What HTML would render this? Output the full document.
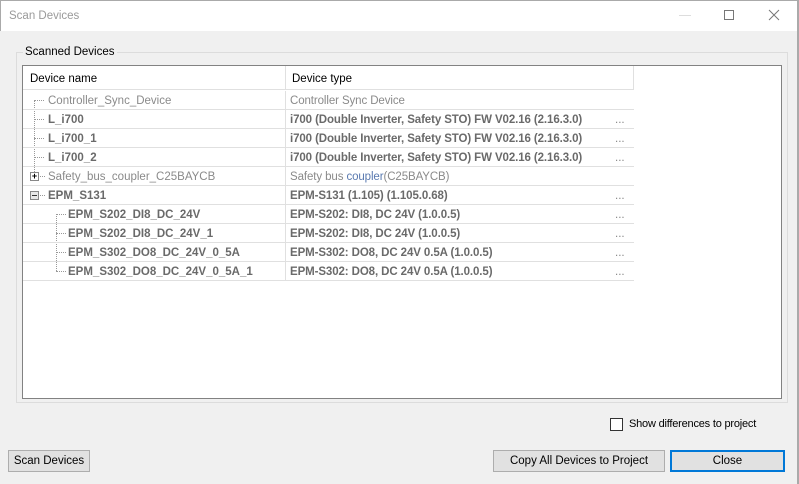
<!DOCTYPE html>
<html><head><style>
*{margin:0;padding:0;box-sizing:border-box}
body{width:799px;height:484px;background:#f0f0f0;font-family:"Liberation Sans",sans-serif;font-size:12px;color:#000;position:relative;overflow:hidden}
.a{position:absolute}
.title{left:0;top:0;width:799px;height:31px;background:#fff;border:1px solid #aaa;border-bottom:none}
.grp{left:16px;top:52px;width:772px;height:351px;border:1px solid #dcdcdc}
.grid{left:22px;top:65px;width:760px;height:334px;border:1px solid #828282;background:#fff}
.row{position:absolute;left:0;width:611px;height:19px;border-bottom:1px solid #e0e0e0;font-size:11.5px}
.c1{position:absolute;left:0;width:263px;height:19px;border-right:1px solid #e0e0e0}
.c2{position:absolute;left:267px;top:4px;white-space:nowrap;letter-spacing:-0.1px}
.n{position:absolute;top:4px;white-space:nowrap}
.b{font-weight:bold;color:#6a6a6a}
.g{color:#8a8a8a}
.dots{position:absolute;left:592px;top:4px;color:#888}
.btn{border:1px solid #adadad;background:#e1e1e1;text-align:center;line-height:21px;font-size:11.5px}
</style></head><body>
<div class="a title"></div>
<div class="a" style="left:9px;top:10px;color:#9a9a9a;font-size:11.5px">Scan Devices</div>
<div class="a" style="left:679px;top:15px;width:12px;height:1px;background:#ddd"></div>
<div class="a" style="left:724px;top:10px;width:10px;height:10px;border:1px solid #777"></div>
<svg class="a" style="left:768px;top:9px" width="12" height="12"><path d="M1 1L11 11M11 1L1 11" stroke="#777" stroke-width="1"/></svg>
<div class="a" style="left:797px;top:0;width:2px;height:484px;background:#aaa"></div>
<div class="a grp"></div>
<div class="a" style="left:23px;top:46px;background:#f0f0f0;padding:0 2px;font-size:11.5px">Scanned Devices</div>
<div class="a grid">
 <div class="row" style="top:0;height:24px;border-bottom:1px solid #e0e0e0">
  <div class="c1" style="height:24px"></div>
  <div class="n" style="left:7px;top:7px;color:#000">Device name</div>
  <div class="n" style="left:269px;top:7px;color:#000">Device type</div>
  <div style="position:absolute;left:610px;top:0;width:1px;height:24px;background:#e0e0e0"></div>
 </div>
 <div style="position:absolute;left:11px;top:34px;height:76px;border-left:1px dotted #999"></div>
 <div style="position:absolute;left:33px;top:148px;height:57px;border-left:1px dotted #999"></div>
 <div class="row" style="top:25px"><div class="c1"></div><div style="position:absolute;left:11px;top:9px;width:10px;border-top:1px dotted #999"></div><div class="n g" style="left:25px">Controller_Sync_Device</div><div class="c2 g">Controller Sync Device</div></div>
 <div class="row" style="top:44px"><div class="c1"></div><div style="position:absolute;left:11px;top:9px;width:10px;border-top:1px dotted #999"></div><div class="n b" style="left:25px">L_i700</div><div class="c2 b">i700 (Double Inverter, Safety STO) FW V02.16 (2.16.3.0)</div><div class="dots">...</div></div>
 <div class="row" style="top:63px"><div class="c1"></div><div style="position:absolute;left:11px;top:9px;width:10px;border-top:1px dotted #999"></div><div class="n b" style="left:25px">L_i700_1</div><div class="c2 b">i700 (Double Inverter, Safety STO) FW V02.16 (2.16.3.0)</div><div class="dots">...</div></div>
 <div class="row" style="top:82px"><div class="c1"></div><div style="position:absolute;left:11px;top:9px;width:10px;border-top:1px dotted #999"></div><div class="n b" style="left:25px">L_i700_2</div><div class="c2 b">i700 (Double Inverter, Safety STO) FW V02.16 (2.16.3.0)</div><div class="dots">...</div></div>
 <div class="row" style="top:101px"><div class="c1"></div><div style="position:absolute;left:7px;top:5px;width:9px;height:9px;border:1px solid #888;background:#fff;font-size:9px;line-height:7px;text-align:center;font-weight:bold">+</div><div style="position:absolute;left:17px;top:9px;width:5px;border-top:1px dotted #999"></div><div class="n g" style="left:25px">Safety_bus_coupler_C25BAYCB</div><div class="c2 g">Safety bus <span style="color:#5a7ab0">coupler</span>(C25BAYCB)</div></div>
 <div class="row" style="top:120px"><div class="c1"></div><div style="position:absolute;left:7px;top:5px;width:9px;height:9px;border:1px solid #888;background:#e8e8e8"><div style="margin:3px 1px;height:1px;background:#333"></div></div><div style="position:absolute;left:17px;top:9px;width:5px;border-top:1px dotted #999"></div><div class="n b" style="left:25px">EPM_S131</div><div class="c2 b">EPM-S131 (1.105) (1.105.0.68)</div><div class="dots">...</div></div>
 <div class="row" style="top:139px"><div class="c1"></div><div style="position:absolute;left:33px;top:9px;width:10px;border-top:1px dotted #999"></div><div class="n b" style="left:45px">EPM_S202_DI8_DC_24V</div><div class="c2 b">EPM-S202: DI8, DC 24V (1.0.0.5)</div><div class="dots">...</div></div>
 <div class="row" style="top:158px"><div class="c1"></div><div style="position:absolute;left:33px;top:9px;width:10px;border-top:1px dotted #999"></div><div class="n b" style="left:45px">EPM_S202_DI8_DC_24V_1</div><div class="c2 b">EPM-S202: DI8, DC 24V (1.0.0.5)</div><div class="dots">...</div></div>
 <div class="row" style="top:177px"><div class="c1"></div><div style="position:absolute;left:33px;top:9px;width:10px;border-top:1px dotted #999"></div><div class="n b" style="left:45px">EPM_S302_DO8_DC_24V_0_5A</div><div class="c2 b">EPM-S302: DO8, DC 24V 0.5A (1.0.0.5)</div><div class="dots">...</div></div>
 <div class="row" style="top:196px"><div class="c1"></div><div style="position:absolute;left:33px;top:9px;width:10px;border-top:1px dotted #999"></div><div class="n b" style="left:45px">EPM_S302_DO8_DC_24V_0_5A_1</div><div class="c2 b">EPM-S302: DO8, DC 24V 0.5A (1.0.0.5)</div><div class="dots">...</div></div>
</div>
<div class="a" style="left:610px;top:418px;width:13px;height:13px;border:1px solid #333;background:#fff"></div>
<div class="a" style="left:629px;top:418px;font-size:11px;letter-spacing:-0.2px">Show differences to project</div>
<div class="a btn" style="left:8px;top:450px;width:82px;height:22px">Scan Devices</div>
<div class="a btn" style="left:493px;top:450px;width:172px;height:22px">Copy All Devices to Project</div>
<div class="a btn" style="left:670px;top:450px;width:115px;height:22px;border:2px solid #0078d7;line-height:19px">Close</div>
</body></html>
